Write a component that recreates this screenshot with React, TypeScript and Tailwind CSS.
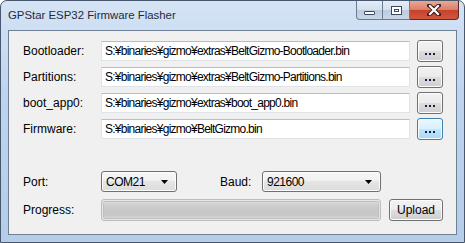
import React from 'react';

const font = { fontFamily: '"Liberation Sans", Arial, sans-serif' };

function BrowseButton({ focused = false }: { focused?: boolean }) {
  return (
    <div
      className={
        focused
          ? 'w-[26px] h-[22px] rounded-[3px] border border-[#3c7fb1] bg-[linear-gradient(#eaf6fd_0%,#d9f0fc_50%,#bee6fd_50%,#a7d9f5_100%)] shadow-[inset_0_0_0_1px_#fcfcfc] flex items-center justify-center'
          : 'w-[26px] h-[22px] rounded-[3px] border border-[#707070] bg-[linear-gradient(#f2f2f2_0%,#ebebeb_50%,#dddddd_50%,#cfcfcf_100%)] shadow-[inset_0_0_0_1px_#fcfcfc] flex items-center justify-center'
      }
    >
      <div className="flex gap-[2px] mt-[5px]">
        <span className="w-[2px] h-[2px] bg-[#1a1a4a]" />
        <span className="w-[2px] h-[2px] bg-[#1a1a4a]" />
        <span className="w-[2px] h-[2px] bg-[#1a1a4a]" />
      </div>
    </div>
  );
}

function FileRow({ label, path, focused }: { label: string; path: string; focused?: boolean }) {
  return (
    <div className="flex items-center h-[22px]">
      <div className="w-[78px] text-[12px] text-black">{label}</div>
      <div className="w-[309px] h-[20px] bg-white border border-[#dfe3e8] border-t-[#b9bcc2] flex items-center pl-[3px] text-[12px] tracking-[-0.75px] text-black whitespace-nowrap overflow-hidden">
        {path}
      </div>
      <div className="ml-[7px]">
        <BrowseButton focused={focused} />
      </div>
    </div>
  );
}

function Combo({ value, width }: { value: string; width: string }) {
  return (
    <div
      className={`${width} h-[21px] rounded-[3px] border border-[#707070] bg-[linear-gradient(#f7f7f7_0%,#f0f0f0_50%,#e5e5e5_50%,#dcdcdc_100%)] shadow-[inset_0_0_0_1px_#fcfcfc] flex items-center pl-[4px] pr-[8px] text-[12px] tracking-[-0.5px] text-black`}
    >
      <span className="flex-1">{value}</span>
      <svg width="7" height="4" viewBox="0 0 7 4">
        <path d="M0 0h7L3.5 4z" fill="#000" />
      </svg>
    </div>
  );
}

export default function App() {
  return (
    <div className="w-[465px] h-[243px] bg-white" style={font}>
      <div className="w-[465px] h-[243px] rounded-t-[7px] border border-[#47586e] bg-[linear-gradient(#d5e4f5,#bdd3ee_40%,#b6cdea)] flex flex-col">
        <div className="h-[29px] flex items-start justify-between">
          <div className="pl-[7px] pt-[6px] text-[11.4px] text-[#1e2b3b]">GPStar ESP32 Firmware Flasher</div>
          <div className="flex mr-[5px]">
            <div className="w-[27px] h-[19px] rounded-bl-[4px] border border-t-0 border-[#6a7b90] bg-[linear-gradient(#e4ecf6_0%,#d4e0ee_50%,#bccbdd_50%,#c9d7e8_100%)] flex items-center justify-center">
              <div className="w-[11px] h-[4px] mt-[5px] bg-white border border-[#3b4a5e] rounded-[1px]" />
            </div>
            <div className="w-[27px] h-[19px] border border-t-0 border-l-0 border-[#6a7b90] bg-[linear-gradient(#e4ecf6_0%,#d4e0ee_50%,#bccbdd_50%,#c9d7e8_100%)] flex items-center justify-center">
              <div className="w-[11px] h-[9px] border border-[#3b4a5e] bg-white flex items-center justify-center">
                <div className="w-[5px] h-[3px] border border-[#3b4a5e]" />
              </div>
            </div>
            <div className="w-[49px] h-[19px] rounded-br-[4px] border border-t-0 border-l-0 border-[#5a2a22] bg-[linear-gradient(#e9a897_0%,#dc7c65_50%,#c7402a_50%,#d0573f_100%)] flex items-center justify-center">
              <svg width="14" height="12" viewBox="0 0 14 12">
                <path
                  d="M2 1.5L7 5.2 12 1.5M2 10.5L7 6.8 12 10.5M2.5 1.5L11.5 10.5M11.5 1.5L2.5 10.5"
                  stroke="#3a1c16"
                  strokeWidth="4"
                  strokeLinecap="square"
                  fill="none"
                />
                <path
                  d="M3 2L11 10M11 2L3 10"
                  stroke="#ffffff"
                  strokeWidth="2.2"
                  strokeLinecap="square"
                  fill="none"
                />
              </svg>
            </div>
          </div>
        </div>
        <div className="mx-[7px] h-[205px] border border-[#6f7f94] bg-[#f0f0f0] pl-[14px] pt-[9px] flex flex-col">
          <div className="flex flex-col gap-[4px]">
            <FileRow label="Bootloader:" path="S:¥binaries¥gizmo¥extras¥BeltGizmo-Bootloader.bin" />
            <FileRow label="Partitions:" path="S:¥binaries¥gizmo¥extras¥BeltGizmo-Partitions.bin" />
            <FileRow label="boot_app0:" path="S:¥binaries¥gizmo¥extras¥boot_app0.bin" />
            <FileRow label="Firmware:" path="S:¥binaries¥gizmo¥BeltGizmo.bin" focused />
          </div>
          <div className="flex items-center h-[21px] mt-[31px]">
            <div className="w-[78px] text-[12px] text-black">Port:</div>
            <Combo value="COM21" width="w-[76px]" />
            <div className="ml-[43px] w-[42px] text-[12px] text-black">Baud:</div>
            <Combo value="921600" width="w-[119px]" />
          </div>
          <div className="flex items-center h-[22px] mt-[7px]">
            <div className="w-[78px] text-[12px] text-black">Progress:</div>
            <div className="w-[280px] h-[22px] rounded-[3px] border border-[#bcbcbc] bg-[#e6e6e6] p-[1px]">
              <div className="w-full h-full rounded-[2px] bg-[linear-gradient(#dadada,#cbcbcb_30%,#c6c6c6_80%,#d6d6d6)] border border-[#c0c0c0]" />
            </div>
            <div className="ml-[8px] w-[54px] h-[22px] rounded-[3px] border border-[#707070] bg-[linear-gradient(#f2f2f2_0%,#ebebeb_50%,#dddddd_50%,#cfcfcf_100%)] shadow-[inset_0_0_0_1px_#fcfcfc] flex items-center justify-center text-[12px] text-black">
              Upload
            </div>
          </div>
        </div>
      </div>
    </div>
  );
}
